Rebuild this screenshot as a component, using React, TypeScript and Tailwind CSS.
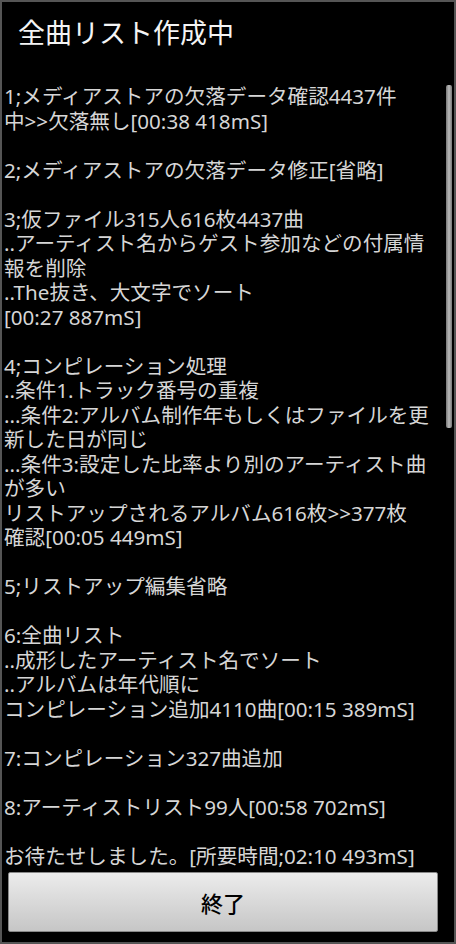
const lines = [
  '1;メディアストアの欠落データ確認4437件',
  '中>>欠落無し[00:38 418mS]',
  '',
  '2;メディアストアの欠落データ修正[省略]',
  '',
  '3;仮ファイル315人616枚4437曲',
  '..アーティスト名からゲスト参加などの付属情',
  '報を削除',
  '..The抜き、大文字でソート',
  '[00:27 887mS]',
  '',
  '4;コンピレーション処理',
  '..条件1.トラック番号の重複',
  '...条件2:アルバム制作年もしくはファイルを更',
  '新した日が同じ',
  '...条件3:設定した比率より別のアーティスト曲',
  'が多い',
  'リストアップされるアルバム616枚>>377枚',
  '確認[00:05 449mS]',
  '',
  '5;リストアップ編集省略',
  '',
  '6:全曲リスト',
  '..成形したアーティスト名でソート',
  '..アルバムは年代順に',
  'コンピレーション追加4110曲[00:15 389mS]',
  '',
  '7:コンピレーション327曲追加',
  '',
  '8:アーティストリスト99人[00:58 702mS]',
  '',
  'お待たせしました。[所要時間;02:10 493mS]',
]

export default function App() {
  return (
    <div className="w-[456px] h-[944px] bg-black border-2 border-[#555] flex flex-col font-['Noto_Sans','Noto_Sans_CJK_JP',sans-serif]">
      {/* Dialog title */}
      <div className="h-[82px] shrink-0 pt-[14px] pl-[16px]">
        <h1 className="text-[27px] leading-[34px] text-[#f4f4f4]">全曲リスト作成中</h1>
      </div>

      {/* Log text */}
      <div className="relative flex-1 overflow-hidden">
        <div className="pl-[2px] text-[20.6px] leading-[24.5px] text-[#d6d6d6]">
          {lines.map((line, i) =>
            line ? (
              <p key={i} className="whitespace-nowrap">{line}</p>
            ) : (
              <div key={i} className="h-[24.5px]" />
            )
          )}
        </div>
        <div className="absolute right-[2px] top-[1px] w-[6px] h-[343px] rounded-[2px] bg-gradient-to-r from-[#777] via-[#bbb] to-[#777]" />
      </div>

      {/* Close button */}
      <div className="shrink-0 pl-[6px] pr-[16px] pb-[10px] pt-[4px]">
        <button className="w-full h-[60px] border border-[#888] rounded-[2px] bg-gradient-to-b from-[#ececec] to-[#c6c6c6] text-[22px] font-medium text-black font-['Noto_Sans_CJK_JP',sans-serif]">
          終了
        </button>
      </div>
    </div>
  )
}
